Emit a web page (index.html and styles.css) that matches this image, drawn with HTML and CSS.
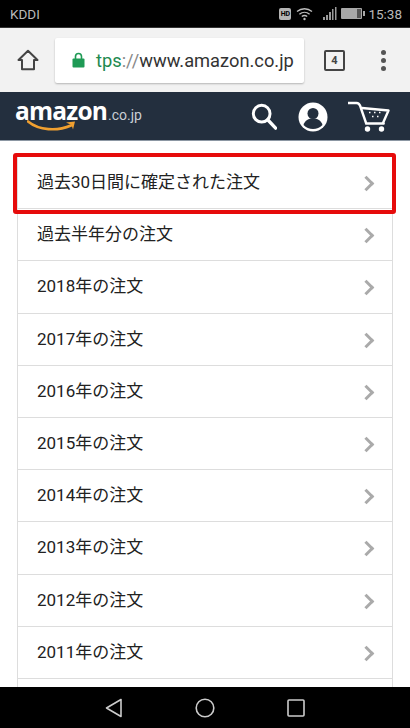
FILE: index.html
```html
<!DOCTYPE html>
<html lang="ja">
<head>
  <meta charset="UTF-8">
  <title>Amazon 注文履歴</title>
  <link rel="stylesheet" href="styles.css">
</head>
<body>
  <div class="phone">
    <div class="status-bar">
      <span class="carrier">KDDI</span>
      <div class="status-icons">
        <span class="hd">HD</span>
        <svg width="17" height="14" viewBox="0 0 17 14" fill="none" stroke="#bdbdbd" stroke-width="1.3"><path d="M1 4.6C5.4.8 11.6.8 16 4.6M3.4 7.2c3-2.5 7.2-2.5 10.2 0M5.8 9.6c1.600-1.300 3.800-1.300 5.400 0"/><circle cx="8.500" cy="12" r="1.200" fill="#bdbdbd" stroke="none"/></svg>
        <svg class="signal" width="14" height="13" viewBox="0 0 14 13" fill="#9a9a9a"><rect x="0" y="10" width="2" height="3"/><rect x="3" y="8" width="2" height="5"/><rect x="6" y="5" width="2" height="8"/><rect x="9" y="2" width="1.500" height="11"/><rect x="12" y="0" width="1.500" height="13"/></svg>
        <svg class="battery" width="24" height="11" viewBox="0 0 24 11"><rect x="0" y="0" width="21" height="11" rx="1" fill="#a8a8a8"/><rect x="16" y="1" width="4" height="9" fill="#555"/><rect x="22" y="3" width="2" height="5" fill="#a8a8a8"/></svg>
        <span class="clock">15:38</span>
      </div>
    </div>

    <div class="toolbar">
      <svg class="home-btn" width="22" height="22" viewBox="0 0 22 22" fill="none" stroke="#444" stroke-width="2" stroke-linejoin="round"><path d="M1.500 11 11 1.800 20.500 11H17v9.200H5V11z"/></svg>
      <div class="urlbar">
        <svg width="13" height="16" viewBox="0 0 13 16"><path d="M3.500 7V4.500a3 3 0 0 1 6 0V7" fill="none" stroke="#1e9a55" stroke-width="1.600"/><rect x="0.500" y="6.500" width="12" height="9" rx="1" fill="#1e9a55"/></svg>
        <span class="url"><span class="url-https">tps</span><span class="url-sep">://</span>www.amazon.co.jp</span>
      </div>
      <div class="tabs">4</div>
      <div class="menu-dots"><i></i><i></i><i></i></div>
    </div>

    <header class="site-header">
      <div class="logo">
        <span class="logo-word">amazon</span><span class="logo-tld">.co.jp</span>
        <svg class="logo-smile" width="50" height="13" viewBox="0 0 50 13"><path d="M1 1.500C12 10.500 30 11.500 44 5.500" fill="none" stroke="#f0a030" stroke-width="2.600" stroke-linecap="round"/><path d="M39 2.500 48 1.500 46 9.500 44.500 5z" fill="#f0a030"/></svg>
      </div>
      <div class="header-icons">
        <svg class="icon-search" width="26" height="27" viewBox="0 0 28 29" fill="none" stroke="#fff"><circle cx="11.500" cy="11.500" r="9" stroke-width="3.200"/><path d="M18 18l8.500 9" stroke-width="3.600" stroke-linecap="round"/></svg>
        <svg width="30" height="30" viewBox="0 0 30 30"><circle cx="15" cy="15" r="14.500" fill="#fff"/><circle cx="15" cy="11.500" r="5.500" fill="#232f3e"/><path d="M5.500 23c1.500-5 5-6.500 9.500-6.500s8 1.500 9.500 6.500c-2.500 2.500-6 4-9.500 4s-7-1.500-9.500-4z" fill="#232f3e"/></svg>
        <svg width="42" height="32" viewBox="0 0 42 32" fill="none" stroke="#fff"><path d="M0 2h8.500c2 0 3 1 3.700 3l6 17.500h17.500" stroke-width="2.400" stroke-linecap="round"/><path d="M14 7 40.500 9.500 35 22" stroke-width="2.400" stroke-linecap="round" stroke-linejoin="round"/><path d="M21 11.500h1.500M26 11.500h1.500M31 11.500h1.500M24 15.500h1.500M29 15.500h1.500" stroke-width="1.600"/><circle cx="19.500" cy="28" r="2.700" fill="#fff" stroke="none"/><circle cx="33.500" cy="28" r="2.700" fill="#fff" stroke="none"/></svg>
      </div>
    </header>

    <main class="content">
      <ul class="order-list">
        <li class="order-row">過去30日間に確定された注文</li>
        <li class="order-row">過去半年分の注文</li>
        <li class="order-row">2018年の注文</li>
        <li class="order-row">2017年の注文</li>
        <li class="order-row">2016年の注文</li>
        <li class="order-row">2015年の注文</li>
        <li class="order-row">2014年の注文</li>
        <li class="order-row">2013年の注文</li>
        <li class="order-row">2012年の注文</li>
        <li class="order-row">2011年の注文</li>
        <li class="order-row"></li>
      </ul>
      <div class="highlight"></div>
    </main>

    <nav class="nav-bar">
      <svg width="18" height="20" viewBox="0 0 18 20" fill="none" stroke="#ccc" stroke-width="1.600" stroke-linejoin="round"><path d="M16 1.500v17L1.500 10z"/></svg>
      <svg width="20" height="20" viewBox="0 0 20 20" fill="none" stroke="#ccc" stroke-width="1.600"><circle cx="10" cy="10" r="8.800"/></svg>
      <svg width="18" height="18" viewBox="0 0 18 18" fill="none" stroke="#ccc" stroke-width="1.600" stroke-linejoin="round"><rect x="1" y="1" width="16" height="16" rx="1"/></svg>
    </nav>
  </div>
</body>
</html>
```

FILE: styles.css
```css
* { box-sizing: border-box; }
html, body { margin: 0; padding: 0; }
body { font-family: Roboto, "Noto Sans CJK JP", sans-serif; background: #fff; }

.phone { width: 410px; height: 728px; display: flex; flex-direction: column; overflow: hidden; }

.status-bar { height: 28px; flex: none; background: #000; display: flex; align-items: center; justify-content: space-between; padding: 0 8px 0 10px; border-bottom: 1px solid #333; color: #b9b9b9; font-size: 13.500px; }
.status-icons { display: flex; align-items: center; gap: 4px; }
.hd { width: 12px; height: 12px; background: #b5b5b5; color: #000; font-size: 7px; font-weight: 700; line-height: 12px; text-align: center; border-radius: 2px; margin-right: 1px; }
.signal { margin-left: 6px; }
.clock { font-size: 13.500px; margin-left: -1px; }

.toolbar { height: 64px; flex: none; background: #f2f2f2; display: flex; align-items: center; padding: 0 0 0 17px; }
.urlbar { width: 249px; height: 45px; margin-left: 16px; background: #fff; border-radius: 2px; box-shadow: 0 1px 2px rgba(0,0,0,.25); display: flex; align-items: center; padding-left: 17px; gap: 12px; }
.url { font-size: 18.300px; color: #333; white-space: nowrap; margin-left: -1px; }
.url-https { color: #1e8a50; }
.url-sep { color: #888; }
.tabs { width: 21px; height: 21px; margin-left: 20px; border: 2px solid #444; border-radius: 2px; font-size: 11px; font-weight: 700; color: #444; text-align: center; line-height: 17px; }
.menu-dots { margin-left: 36px; display: flex; flex-direction: column; gap: 3px; }
.menu-dots i { display: block; width: 5px; height: 5px; border-radius: 50%; background: #555; }

.site-header { height: 49px; flex: none; background: #232f3e; border-bottom: 1px solid #8c97a3; display: flex; align-items: center; justify-content: space-between; padding: 0 20px 0 15px; }
.logo { position: relative; width: 130px; height: 40px; color: #fff; white-space: nowrap; margin-top: -2px; }
.logo-word { font-family: "Open Sans", sans-serif; font-size: 24.500px; font-weight: 700; letter-spacing: -.8px; line-height: 32px; }
.logo-tld { font-size: 14px; color: #c9ced4; margin-left: 1px; }
.logo-smile { position: absolute; left: 12px; top: 25px; }
.header-icons { display: flex; align-items: center; gap: 20px; margin-top: 2px; }
.icon-search { margin-right: 1px; margin-top: -2px; }

.content { position: relative; flex: 1; min-height: 0; overflow: hidden; background: #fff; }
.order-list { list-style: none; margin: 15px 17px 0 17px; padding: 0; border: 1px solid #ddd; border-bottom: 0; }
.order-row { position: relative; height: 52.200px; border-bottom: 1px solid #ddd; padding-left: 19px; font-size: 17px; line-height: 51px; color: #222; }
.order-row::after { content: ""; position: absolute; right: 20px; top: 21px; width: 8px; height: 8px; border-top: 3px solid #aaa; border-right: 3px solid #aaa; transform: rotate(45deg); }
.order-row:last-child::after { display: none; }
.highlight { position: absolute; left: 13px; top: 12px; width: 383px; height: 61px; border: 4px solid #e60b0b; border-radius: 3px; }

.nav-bar { height: 41px; flex: none; background: #000; display: flex; align-items: center; padding-left: 105px; gap: 72px; }
```
